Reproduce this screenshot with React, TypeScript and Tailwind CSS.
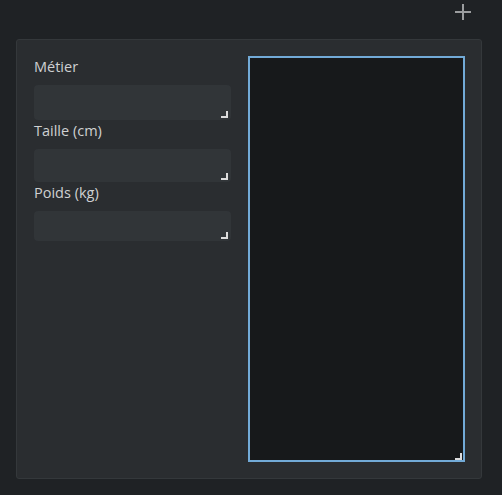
function Grip() {
  return (
    <span className="pointer-events-none absolute right-[3px] bottom-[2px] h-[7px] w-[7px] border-r-2 border-b-2 border-[#dcdcdc]" />
  );
}

interface FieldProps {
  label: string;
  height: string;
}

function Field({ label, height }: FieldProps) {
  return (
    <div className="flex flex-col">
      <label className="mb-[7px] text-[14.5px] leading-[22px] text-[#cfd1d2]">{label}</label>
      <div className={`relative ${height}`}>
        <textarea className="block h-full w-full resize-none rounded-[4px] bg-[#313538] outline-none" />
        <Grip />
      </div>
    </div>
  );
}

export default function App() {
  return (
    <div
      className="h-[495px] w-[502px] overflow-hidden bg-[#1f2225]"
      style={{ fontFamily: '"Open Sans", "Noto Sans", sans-serif' }}
    >
      <div className="flex h-[39px] items-start justify-end pt-[4px] pr-[31px]">
        <svg width="16" height="16" viewBox="0 0 16 16" className="text-[#9b9d9f]">
          <path d="M8 0v16M0 8h16" stroke="currentColor" strokeWidth="2" />
        </svg>
      </div>
      <div className="ml-[16px] flex h-[440px] w-[466px] gap-[17px] rounded-[3px] border border-[#34383b] bg-[#2a2d30] pt-[16px] pr-[16px] pb-[16px] pl-[17px]">
        <div className="flex w-[197px] flex-col">
          <Field label="Métier" height="h-[35px]" />
          <Field label="Taille (cm)" height="h-[33px]" />
          <Field label="Poids (kg)" height="h-[30px]" />
        </div>
        <div className="relative flex-1">
          <textarea className="block h-full w-full resize-none border-2 border-[#72aad7] bg-[#17191b] outline-none" />
          <Grip />
        </div>
      </div>
    </div>
  );
}
